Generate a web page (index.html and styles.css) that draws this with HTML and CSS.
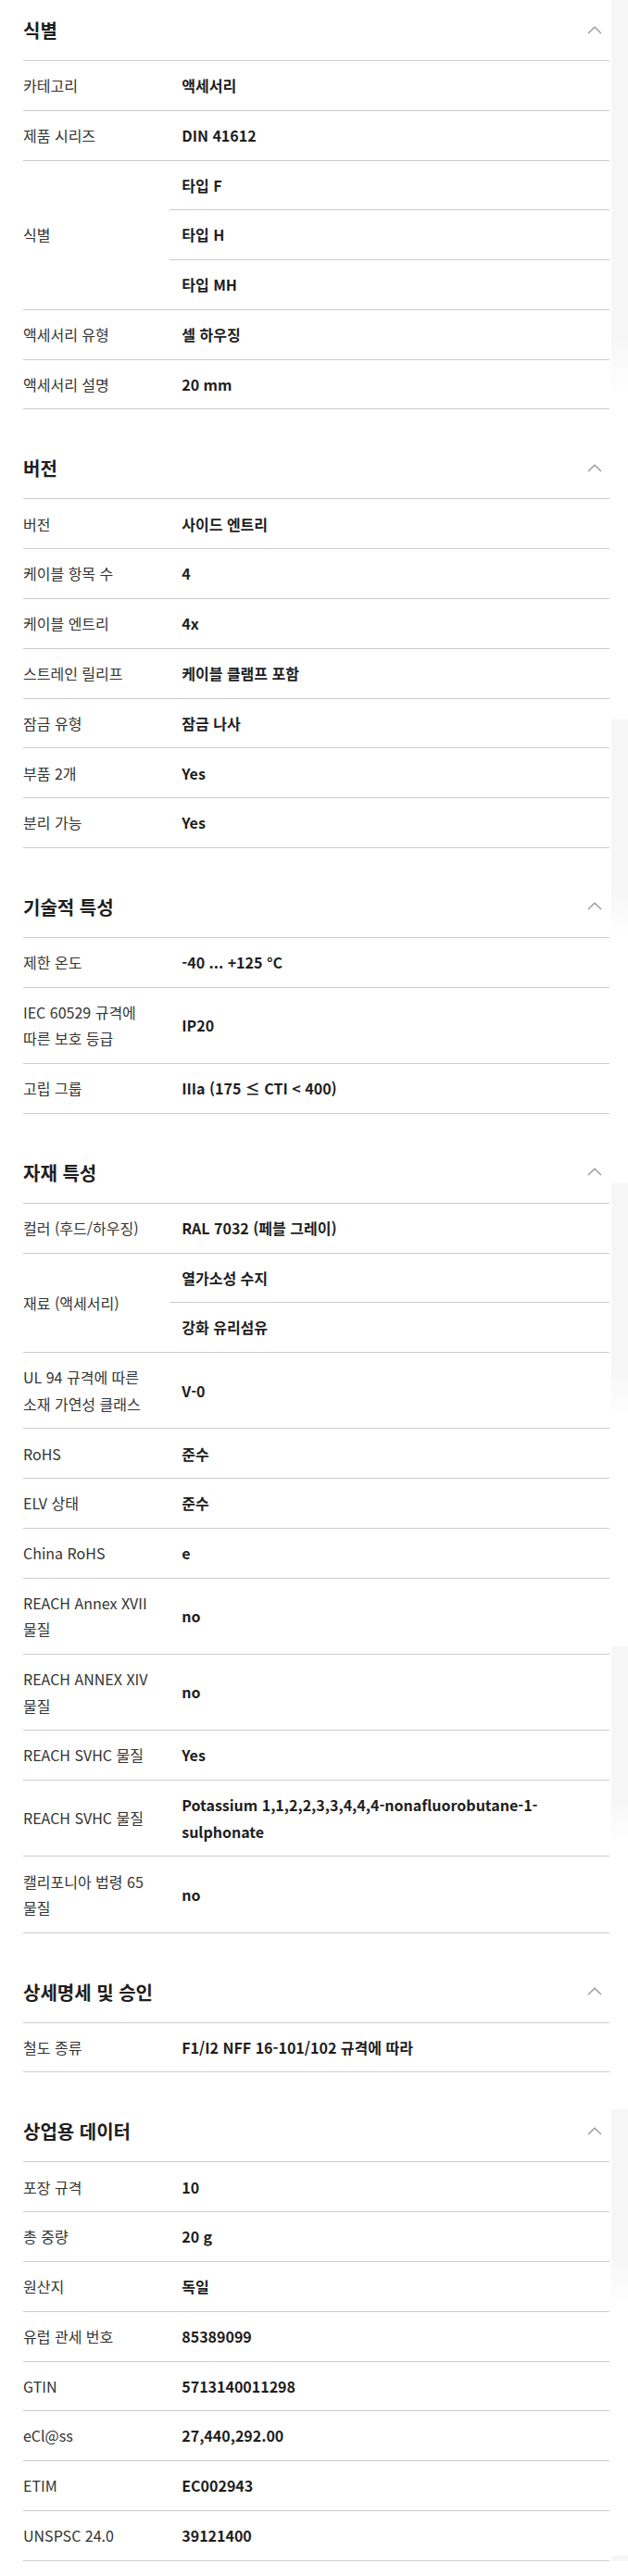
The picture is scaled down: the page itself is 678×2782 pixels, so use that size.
FILE: index.html
```html
<!DOCTYPE html>
<html lang="ko">
<head>
<meta charset="utf-8">
<title>제품 사양</title>
<link rel="stylesheet" href="styles.css">
</head>
<body>
<div class="edge"></div>
<main class="specs">

  <section class="group">
    <header class="group-head"><h2>식별</h2><svg class="chev" viewBox="0 0 16 9" width="16" height="9"><path d="M1 8 L8 1.2 L15 8"/></svg></header>
    <div class="row"><div class="label">카테고리</div><div class="values"><div class="value">액세서리</div></div></div>
    <div class="row"><div class="label">제품 시리즈</div><div class="values"><div class="value">DIN 41612</div></div></div>
    <div class="row"><div class="label">식별</div><div class="values"><div class="value">타입 F</div><div class="value">타입 H</div><div class="value">타입 MH</div></div></div>
    <div class="row"><div class="label">액세서리 유형</div><div class="values"><div class="value">셀 하우징</div></div></div>
    <div class="row"><div class="label">액세서리 설명</div><div class="values"><div class="value">20 mm</div></div></div>
  </section>

  <section class="group">
    <header class="group-head"><h2>버전</h2><svg class="chev" viewBox="0 0 16 9" width="16" height="9"><path d="M1 8 L8 1.2 L15 8"/></svg></header>
    <div class="row"><div class="label">버전</div><div class="values"><div class="value">사이드 엔트리</div></div></div>
    <div class="row"><div class="label">케이블 항목 수</div><div class="values"><div class="value">4</div></div></div>
    <div class="row"><div class="label">케이블 엔트리</div><div class="values"><div class="value">4x</div></div></div>
    <div class="row"><div class="label">스트레인 릴리프</div><div class="values"><div class="value">케이블 클램프 포함</div></div></div>
    <div class="row"><div class="label">잠금 유형</div><div class="values"><div class="value">잠금 나사</div></div></div>
    <div class="row"><div class="label">부품 2개</div><div class="values"><div class="value">Yes</div></div></div>
    <div class="row"><div class="label">분리 가능</div><div class="values"><div class="value">Yes</div></div></div>
  </section>

  <section class="group">
    <header class="group-head"><h2>기술적 특성</h2><svg class="chev" viewBox="0 0 16 9" width="16" height="9"><path d="M1 8 L8 1.2 L15 8"/></svg></header>
    <div class="row"><div class="label">제한 온도</div><div class="values"><div class="value">-40 ... +125 °C</div></div></div>
    <div class="row"><div class="label">IEC 60529 규격에 따른 보호 등급</div><div class="values"><div class="value">IP20</div></div></div>
    <div class="row"><div class="label">고립 그룹</div><div class="values"><div class="value">IIIa (175 ≤ CTI &lt; 400)</div></div></div>
  </section>

  <section class="group">
    <header class="group-head"><h2>자재 특성</h2><svg class="chev" viewBox="0 0 16 9" width="16" height="9"><path d="M1 8 L8 1.2 L15 8"/></svg></header>
    <div class="row"><div class="label">컬러 (후드/하우징)</div><div class="values"><div class="value">RAL 7032 (페블 그레이)</div></div></div>
    <div class="row"><div class="label">재료 (액세서리)</div><div class="values"><div class="value">열가소성 수지</div><div class="value">강화 유리섬유</div></div></div>
    <div class="row"><div class="label">UL 94 규격에 따른 소재 가연성 클래스</div><div class="values"><div class="value">V-0</div></div></div>
    <div class="row"><div class="label">RoHS</div><div class="values"><div class="value">준수</div></div></div>
    <div class="row"><div class="label">ELV 상태</div><div class="values"><div class="value">준수</div></div></div>
    <div class="row"><div class="label">China RoHS</div><div class="values"><div class="value">e</div></div></div>
    <div class="row"><div class="label">REACH Annex XVII 물질</div><div class="values"><div class="value">no</div></div></div>
    <div class="row"><div class="label">REACH ANNEX XIV 물질</div><div class="values"><div class="value">no</div></div></div>
    <div class="row"><div class="label">REACH SVHC 물질</div><div class="values"><div class="value">Yes</div></div></div>
    <div class="row"><div class="label">REACH SVHC 물질</div><div class="values"><div class="value">Potassium 1,1,2,2,3,3,4,4,4-nonafluorobutane-1-sulphonate</div></div></div>
    <div class="row"><div class="label">캘리포니아 법령 65 물질</div><div class="values"><div class="value">no</div></div></div>
  </section>

  <section class="group">
    <header class="group-head"><h2>상세명세 및 승인</h2><svg class="chev" viewBox="0 0 16 9" width="16" height="9"><path d="M1 8 L8 1.2 L15 8"/></svg></header>
    <div class="row"><div class="label">철도 종류</div><div class="values"><div class="value">F1/I2 NFF 16-101/102 규격에 따라</div></div></div>
  </section>

  <section class="group">
    <header class="group-head"><h2>상업용 데이터</h2><svg class="chev" viewBox="0 0 16 9" width="16" height="9"><path d="M1 8 L8 1.2 L15 8"/></svg></header>
    <div class="row"><div class="label">포장 규격</div><div class="values"><div class="value">10</div></div></div>
    <div class="row"><div class="label">총 중량</div><div class="values"><div class="value">20 g</div></div></div>
    <div class="row"><div class="label">원산지</div><div class="values"><div class="value">독일</div></div></div>
    <div class="row"><div class="label">유럽 관세 번호</div><div class="values"><div class="value">85389099</div></div></div>
    <div class="row"><div class="label">GTIN</div><div class="values"><div class="value">5713140011298</div></div></div>
    <div class="row"><div class="label">eCl@ss</div><div class="values"><div class="value">27,440,292.00</div></div></div>
    <div class="row"><div class="label">ETIM</div><div class="values"><div class="value">EC002943</div></div></div>
    <div class="row"><div class="label">UNSPSC 24.0</div><div class="values"><div class="value">39121400</div></div></div>
  </section>

</main>
</body>
</html>
```

FILE: styles.css
```css
* { box-sizing: border-box; }

html, body {
  margin: 0;
  padding: 0;
  background: #fff;
}

body {
  font-family: "Noto Sans CJK KR", "Noto Sans", sans-serif;
  font-size: 16px;
  color: #222;
  position: relative;
  word-break: keep-all;
}

.edge {
  position: absolute;
  top: 0;
  right: 0;
  width: 18px;
  height: 2782px;
  background: linear-gradient(to bottom,
    #f6f6f6 0px, #f6f6f6 360px, #ffffff 430px,
    #ffffff 777px, #f6f6f6 777px, #f6f6f6 960px, #ffffff 1010px,
    #ffffff 1278px, #f6f6f6 1278px, #f6f6f6 1480px, #ffffff 1530px,
    #ffffff 1778px, #f6f6f6 1778px, #f6f6f6 1940px, #ffffff 1990px,
    #ffffff 2278px, #f6f6f6 2278px, #f6f6f6 2440px, #ffffff 2490px,
    #ffffff 2760px, #f6f6f6 2760px);
}

.specs {
  padding: 0 20px 0 25px;
  position: relative;
}

.group + .group {
  margin-top: 31px;
}

.group-head {
  display: flex;
  align-items: center;
  justify-content: space-between;
  padding: 18px 0 17px;
  border-bottom: 1px solid #cccccc;
}

.group-head h2 {
  margin: 0;
  font-size: 20px;
  line-height: 30px;
  font-weight: 700;
  color: #1e1e1e;
}

.chev {
  margin-right: 8px;
  margin-top: -2px;
  fill: none;
  stroke: #9a9a9a;
  stroke-width: 1.4;
}

.row {
  display: grid;
  grid-template-columns: 25% 1fr;
  border-bottom: 1px solid #cccccc;
}

.label {
  align-self: center;
  padding: 12.15px 8px 12.15px 0;
  line-height: 28.5px;
  color: #333;
  font-weight: 400;
}

.values {
  align-self: center;
  display: flex;
  flex-direction: column;
}

.value {
  padding: 12.15px 13px;
  line-height: 28.5px;
  font-weight: 700;
  color: #1e1e1e;
}

.value + .value {
  border-top: 1px solid #cccccc;
}
```
